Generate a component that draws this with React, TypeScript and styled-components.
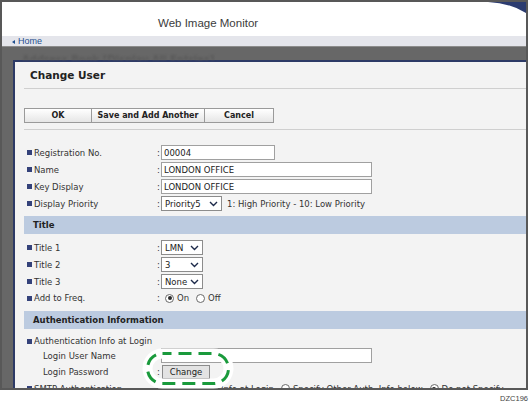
import React from 'react';
import styled, { createGlobalStyle } from 'styled-components';

const GlobalStyle = createGlobalStyle`
  html, body {
    margin: 0;
    padding: 0;
    background: #ffffff;
  }
  body {
    font-family: "DejaVu Sans", Verdana, sans-serif;
    color: #2a2a2a;
  }
`;

const Page = styled.div`
  position: relative;
  width: 530px;
  height: 405px;
`;

const Frame = styled.div`
  width: 528px;
  height: 390px;
  box-sizing: border-box;
  border: 2px solid #585858;
  display: flex;
  flex-direction: column;
  overflow: hidden;
`;

const Header = styled.header`
  position: relative;
  height: 34px;
  flex-shrink: 0;
  box-sizing: border-box;
  padding: 8px 0 0 156px;
  display: flex;
  align-items: center;
  background: #ffffff;
  font-family: "Liberation Sans", Arial, sans-serif;
  font-size: 11.5px;
  color: #3c3c3c;
`;

const Swoosh = styled.svg`
  position: absolute;
  top: 0;
  right: 0;
`;

const NavBar = styled.nav`
  height: 9px;
  flex-shrink: 0;
  display: flex;
  align-items: center;
  gap: 3px;
  padding: 1px 0 0 10px;
  background: #e4e5eb;
  border-bottom: 1px solid #8c8c8c;
  font-family: "Liberation Sans", Arial, sans-serif;
  font-size: 9px;
  line-height: 9px;
  color: #1f4f8f;
`;

const BackArrow = styled.span`
  width: 0;
  height: 0;
  border-top: 2.5px solid transparent;
  border-bottom: 2.5px solid transparent;
  border-right: 3px solid #1f4f8f;
`;

const Backdrop = styled.div`
  flex: 1;
  min-height: 0;
  display: flex;
  flex-direction: column;
  padding-left: 11px;
  background: #676767;
`;

const BehindStrip = styled.div`
  height: 13px;
  flex-shrink: 0;
  box-sizing: border-box;
  overflow: hidden;
  padding: 7px 0 0 9px;
  font-size: 10px;
  font-weight: bold;
  line-height: 12px;
  color: #5a5a5a;
  filter: blur(0.8px);
  white-space: nowrap;
`;

const Dialog = styled.section`
  flex: 1;
  display: flex;
  flex-direction: column;
  padding-left: 9px;
  background: #f3f3f3;
  border-top: 2px solid #2d3a66;
  border-left: 2px solid #2d3a66;
`;

const DialogTitle = styled.h1`
  margin: 0;
  height: 26px;
  display: flex;
  align-items: center;
  padding-left: 6px;
  font-size: 10.5px;
  font-weight: bold;
  color: #222222;
`;

const Divider = styled.div`
  height: 1px;
  background: #cfcfcf;
`;

const ButtonBar = styled.div`
  display: flex;
  padding: 19px 0 6px;
`;

const GroupButton = styled.button<{ $w: number }>`
  width: ${(p) => p.$w}px;
  height: 15px;
  padding: 0;
  margin: 0 0 0 -1px;
  border: 1px solid #9a9a9a;
  background: linear-gradient(#ffffff, #e6e6e6);
  font-family: "DejaVu Sans", Verdana, sans-serif;
  font-size: 8px;
  font-weight: bold;
  color: #222222;
  &:first-child {
    margin-left: 0;
  }
`;

const Form = styled.div`
  display: flex;
  flex-direction: column;
  padding-top: 14px;
`;

const Row = styled.div<{ $h?: number }>`
  height: ${(p) => p.$h ?? 17}px;
  display: flex;
  align-items: center;
  font-size: 8.5px;
  color: #333333;
  white-space: nowrap;
`;

const Label = styled.div<{ $indent?: boolean }>`
  width: 133px;
  box-sizing: border-box;
  display: flex;
  align-items: center;
  gap: 2px;
  padding-left: ${(p) => (p.$indent ? 19 : 3)}px;
`;

const Bullet = styled.span`
  width: 5px;
  height: 5px;
  background: #34427a;
`;

const Colon = styled.span`
  width: 4px;
`;

const TextInput = styled.input<{ $w: number }>`
  width: ${(p) => p.$w}px;
  height: 15px;
  box-sizing: border-box;
  margin: 0;
  padding: 0 2px;
  border: 1px solid #a0a0a0;
  background: #ffffff;
  font-family: "DejaVu Sans", Verdana, sans-serif;
  font-size: 8.5px;
  color: #222222;
  outline: none;
`;

const SelectBox = styled.div<{ $w: number }>`
  width: ${(p) => p.$w}px;
  height: 15px;
  box-sizing: border-box;
  display: flex;
  align-items: center;
  justify-content: space-between;
  padding: 0 3px;
  border: 1px solid #8c8c8c;
  background: #ffffff;
  color: #222222;
`;

const Hint = styled.span`
  margin-left: 5px;
`;

const SectionBar = styled.div<{ $mt: number }>`
  height: 18px;
  margin: ${(p) => p.$mt}px 0 5px;
  display: flex;
  align-items: center;
  padding-left: 9px;
  background: #bccbe0;
  font-size: 8.5px;
  font-weight: bold;
  color: #222222;
`;

const RadioSet = styled.div`
  display: flex;
  align-items: center;
  gap: 3px;
  padding-left: 4px;
`;

const RadioDot = styled.span<{ $on?: boolean }>`
  position: relative;
  width: 7px;
  height: 7px;
  border: 1px solid #6a6a6a;
  border-radius: 50%;
  background: #ffffff;
  margin-left: 4px;
  &::after {
    content: '';
    position: absolute;
    inset: 1.5px;
    border-radius: 50%;
    background: ${(p) => (p.$on ? '#2a2a2a' : 'transparent')};
  }
  &:first-child {
    margin-left: 0;
  }
`;

const ChangeButton = styled.button`
  width: 48px;
  height: 14px;
  margin: 0 0 0 1px;
  padding: 0;
  border: 1px solid #8b8b8b;
  background: #e3e3e3;
  font-family: "DejaVu Sans", Verdana, sans-serif;
  font-size: 8.5px;
  color: #222222;
`;

const Caption = styled.div`
  display: flex;
  justify-content: flex-end;
  padding-right: 2px;
  margin-top: 4px;
  font-family: "Liberation Sans", Arial, sans-serif;
  font-size: 7.5px;
  line-height: 9px;
  color: #444444;
`;

const Annotation = styled.svg`
  position: absolute;
  left: 140px;
  top: 346px;
  z-index: 2;
`;

const Chevron = () => (
  <svg width="9" height="6" viewBox="0 0 9 6">
    <polyline points="1,1 4.5,4.5 8,1" fill="none" stroke="#1d2a4a" strokeWidth="1.4" />
  </svg>
);

const Select = ({ w, value }: { w: number; value: string }) => (
  <SelectBox $w={w}>
    <span>{value}</span>
    <Chevron />
  </SelectBox>
);

const Field = ({
  label,
  indent,
  h,
  children,
}: {
  label: string;
  indent?: boolean;
  h?: number;
  children?: React.ReactNode;
}) => (
  <Row $h={h}>
    <Label $indent={indent}>
      {!indent && <Bullet />}
      {label}
    </Label>
    {children && <Colon>:</Colon>}
    {children}
  </Row>
);

export default function App() {
  return (
    <Page>
      <GlobalStyle />
      <Frame>
        <Header>
          Web Image Monitor
          <Swoosh width="38" height="12" viewBox="0 0 38 12">
            <path d="M0 0 L38 0 L38 11 Q 22 1 0 0 Z" fill="#2c3c70" />
          </Swoosh>
        </Header>
        <NavBar>
          <BackArrow />
          Home
        </NavBar>
        <Backdrop>
          <BehindStrip>Address Book [Display All Entries]</BehindStrip>
          <Dialog>
            <DialogTitle>Change User</DialogTitle>
            <Divider />
            <ButtonBar>
              <GroupButton $w={68}>OK</GroupButton>
              <GroupButton $w={114}>Save and Add Another</GroupButton>
              <GroupButton $w={70}>Cancel</GroupButton>
            </ButtonBar>
            <Divider />
            <Form>
              <Field label="Registration No.">
                <TextInput $w={114} readOnly value="00004" />
              </Field>
              <Field label="Name">
                <TextInput $w={211} readOnly value="LONDON OFFICE" />
              </Field>
              <Field label="Key Display">
                <TextInput $w={211} readOnly value="LONDON OFFICE" />
              </Field>
              <Field label="Display Priority">
                <Select w={61} value="Priority5" />
                <Hint>1: High Priority - 10: Low Priority</Hint>
              </Field>

              <SectionBar $mt={4}>Title</SectionBar>
              <Field label="Title 1">
                <Select w={42} value="LMN" />
              </Field>
              <Field label="Title 2">
                <Select w={42} value="3" />
              </Field>
              <Field label="Title 3">
                <Select w={42} value="None" />
              </Field>
              <Field label="Add to Freq." h={16}>
                <RadioSet>
                  <RadioDot $on />
                  On
                  <RadioDot />
                  Off
                </RadioSet>
              </Field>

              <SectionBar $mt={5}>Authentication Information</SectionBar>
              <Field label="Authentication Info at Login" h={14} />
              <Field label="Login User Name" indent h={15}>
                <TextInput $w={211} readOnly value="" />
              </Field>
              <Field label="Login Password" indent h={17}>
                <ChangeButton>Change</ChangeButton>
              </Field>
              <Field label="SMTP Authentication">
                <RadioSet>
                  <RadioDot />
                  Use Auth. Info at Login
                  <RadioDot />
                  Specify Other Auth. Info below
                  <RadioDot $on />
                  Do not Specify
                </RadioSet>
              </Field>
            </Form>
          </Dialog>
        </Backdrop>
      </Frame>
      <Caption>DZC196</Caption>
      <Annotation width="96" height="46" viewBox="0 0 96 46">
        <rect x="7.5" y="7.5" width="81" height="30" rx="15" ry="15" fill="none" stroke="#ffffff" strokeWidth="10" />
        <rect
          x="7.5"
          y="7.5"
          width="81"
          height="30"
          rx="15"
          ry="15"
          fill="none"
          stroke="#1a9a3c"
          strokeWidth="3"
          strokeDasharray="13 7"
          strokeDashoffset="4"
        />
      </Annotation>
    </Page>
  );
}
